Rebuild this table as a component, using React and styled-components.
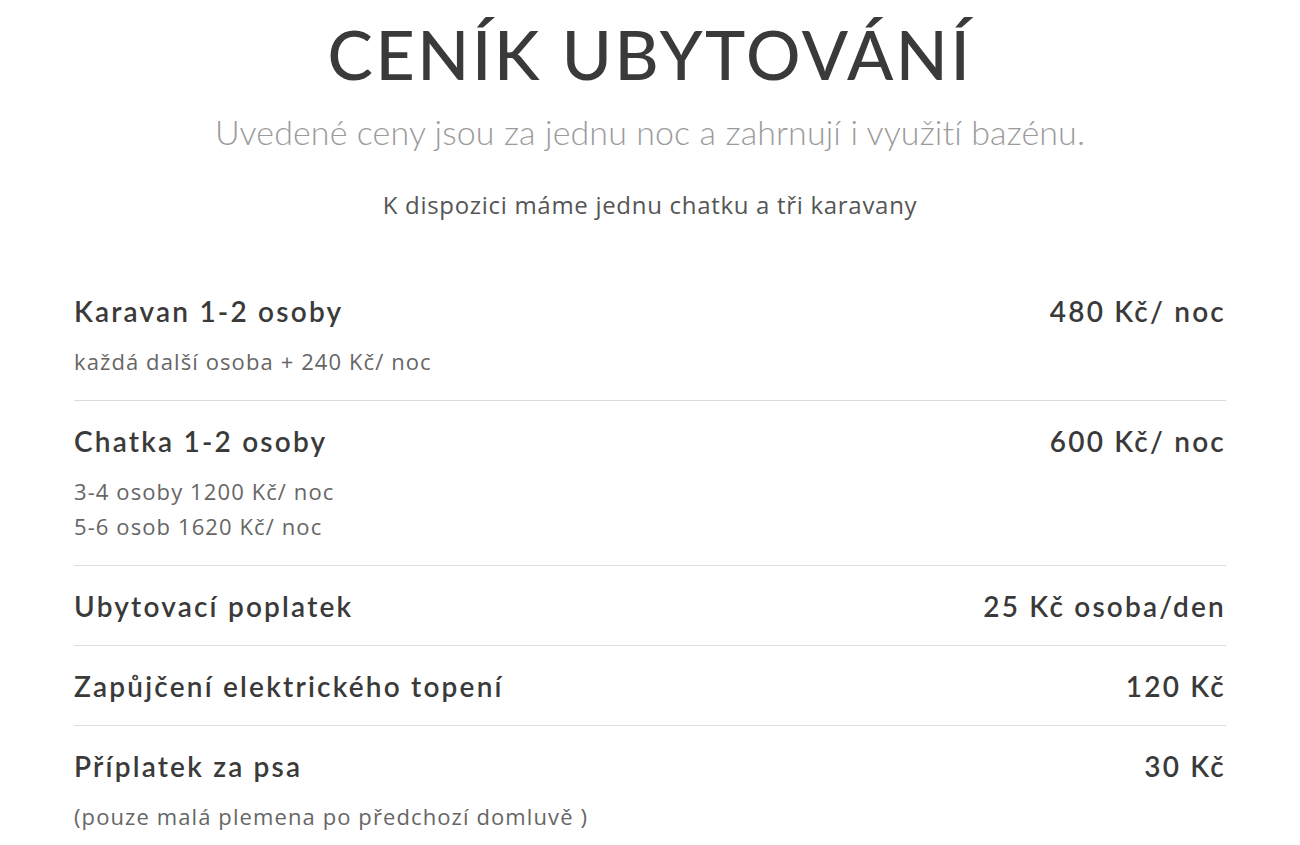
import styled, { createGlobalStyle } from "styled-components";

const GlobalStyle = createGlobalStyle`
  body {
    margin: 0;
    background: #fff;
    font-family: Lato, "Liberation Sans", sans-serif;
  }
`;

const Page = styled.div`
  width: 1152px;
  margin: 0 auto;
  padding-top: 14px;
`;

const Header = styled.header`
  display: flex;
  flex-direction: column;
  align-items: center;
`;

const Title = styled.h1`
  margin: 0;
  font-size: 68px;
  line-height: 80px;
  font-weight: 500;
  letter-spacing: 2.6px;
  color: #3a3a3a;
`;

const Lead = styled.p`
  margin: 18px 0 0;
  font-size: 34px;
  line-height: 40px;
  font-weight: 300;
  letter-spacing: 0.1px;
  color: #9b9b9b;
`;

const Note = styled.p`
  margin: 38px 0 0;
  font-family: "Open Sans", Lato, sans-serif;
  font-size: 24px;
  line-height: 30px;
  letter-spacing: 0.7px;
  color: #555;
`;

const List = styled.div`
  margin-top: 51px;
  display: flex;
  flex-direction: column;
`;

const Row = styled.div`
  padding: 22px 0 21px;
  border-top: ${(p) => (p.$first ? "none" : "1px solid #dcdcdc")};
`;

const Head = styled.div`
  display: flex;
  justify-content: space-between;
  align-items: center;
  font-size: 28px;
  line-height: 36px;
  font-weight: 600;
  letter-spacing: 2.2px;
  color: #3a3a3a;
`;

const Details = styled.div`
  margin-top: 15px;
  font-family: "Open Sans", Lato, sans-serif;
  font-size: 22px;
  line-height: 35px;
  letter-spacing: 1.1px;
  color: #666;
`;

const items = [
  {
    name: "Karavan 1-2 osoby",
    price: "480 Kč/ noc",
    notes: ["každá další osoba + 240 Kč/ noc"],
  },
  {
    name: "Chatka 1-2 osoby",
    price: "600 Kč/ noc",
    notes: ["3-4 osoby 1200 Kč/ noc", "5-6 osob 1620 Kč/ noc"],
  },
  { name: "Ubytovací poplatek", price: "25 Kč osoba/den", notes: [] },
  { name: "Zapůjčení elektrického topení", price: "120 Kč", notes: [] },
  {
    name: "Příplatek za psa",
    price: "30 Kč",
    notes: ["(pouze malá plemena po předchozí domluvě )"],
  },
];

export default function App() {
  return (
    <>
      <GlobalStyle />
      <Page>
        <Header>
          <Title>CENÍK UBYTOVÁNÍ</Title>
          <Lead>Uvedené ceny jsou za jednu noc a zahrnují i využití bazénu.</Lead>
          <Note>K dispozici máme jednu chatku a tři karavany</Note>
        </Header>
        <List>
          {items.map((it, i) => (
            <Row key={it.name} $first={i === 0}>
              <Head>
                <span>{it.name}</span>
                <span>{it.price}</span>
              </Head>
              {it.notes.length > 0 && (
                <Details>
                  {it.notes.map((n) => (
                    <div key={n}>{n}</div>
                  ))}
                </Details>
              )}
            </Row>
          ))}
        </List>
      </Page>
    </>
  );
}
